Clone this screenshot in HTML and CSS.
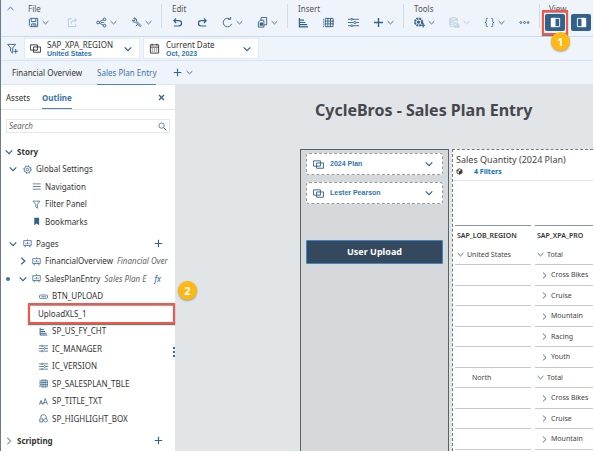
FILE: index.html
```html
<!DOCTYPE html>
<html lang="en">
<head>
<meta charset="utf-8">
<title>Sales Plan Entry</title>
<link rel="stylesheet" href="styles.css">
</head>
<body>
<svg class="sprite" aria-hidden="true">
  <symbol id="down" viewBox="0 0 8 8"><path d="M.7 2.4 4 5.6l3.300-3.200"/></symbol>
  <symbol id="right" viewBox="0 0 8 8"><path d="M2.300.700 5.800 4 2.300 7.300"/></symbol>
  <symbol id="save" viewBox="0 0 12 12"><path d="M2.500 1.500h8v9h-8l-1-1v-7zM3.500 1.500v3.500h5V1.500M4 10.500V7.500h4.500v3M6.500 8v2"/></symbol>
  <symbol id="export" viewBox="0 0 12 12"><path d="M5 2H1.500v8.500h8V8M4.500 7.500c0-3 2-4 5.500-4M8 1.500l2.500 2L8 5.500"/></symbol>
  <symbol id="share" viewBox="0 0 12 12"><path d="M3.500 5.500 8 3M3.500 6.500 8 9"/><circle cx="2.200" cy="6" r="1.500"/><circle cx="9.300" cy="2.600" r="1.500"/><circle cx="9.300" cy="9.400" r="1.500"/><path d="M5.500 6h3"/></symbol>
  <symbol id="wrench" viewBox="0 0 12 12"><path d="M1.500 3.500a2.500 2.500 0 0 0 3.500 2l5 5 1-1-5-5A2.500 2.500 0 0 0 3 1.200L4.500 3 3.500 4.200zM7 8l-1.500 2"/></symbol>
  <symbol id="undo" viewBox="0 0 12 12"><path class="heavy" d="M4.500 1.500 2 4l2.500 2.500M2 4h5.500a2.900 2.900 0 0 1 0 5.800H2"/></symbol>
  <symbol id="redo" viewBox="0 0 12 12"><path class="heavy" d="M7.500 1.500 10 4 7.500 6.500M10 4H4.500a2.900 2.900 0 0 0 0 5.800H10"/></symbol>
  <symbol id="refresh" viewBox="0 0 12 12"><path d="M10.500 7.500A4.700 4.700 0 1 1 8.500 2M6.500 2.500h3V0"/></symbol>
  <symbol id="copy" viewBox="0 0 12 12"><path d="M4.500 3.500v-3h6v8h-3M1.500 5.500l2-2h4v7.500h-6z"/><path class="fill" d="M3 6h3.500v3.500H3z"/></symbol>
  <symbol id="bars" viewBox="0 0 12 12"><path class="heavy" d="M1.500 1v9.700H11M2 3.500h4.500M2 6h6M2 8.400h8"/></symbol>
  <symbol id="grid" viewBox="0 0 12 12"><path d="M2.500 1.500h8.500v9H2.500zM5.300 1v10M8.200 1v10M2 4.500h10M2 7.500h10M.5 2v1M.5 4v1M.5 6v1M.5 8v1M.5 10v1"/></symbol>
  <symbol id="sliders" viewBox="0 0 12 12"><path d="M0 2.500h3M5.500 2.500H12M0 6h6M9 6h3M0 9.500h3M5.500 9.500H12"/><circle cx="4.200" cy="2.500" r="1"/><circle cx="7.500" cy="6" r="1.200"/><circle cx="4.200" cy="9.500" r="1"/></symbol>
  <symbol id="plus" viewBox="0 0 12 12"><path class="bold" d="M6 1v10M1 6h10"/></symbol>
  <symbol id="gearadd" viewBox="0 0 12 12"><circle class="dash" cx="5" cy="5.500" r="3.900"/><circle class="fill" cx="5" cy="5.500" r="1.800"/><path class="heavy" d="M10 6.500v5M7.500 9H12"/></symbol>
  <symbol id="data" viewBox="0 0 12 12"><ellipse cx="5" cy="2.200" rx="4" ry="1.400"/><path d="M1 2.200v7c0 1 2 1.500 3 1.500M9 2.200V5M1 4.600c1 1 2.500 1 4 1M1 7c1 1 2 1 3 1M5.500 11V6.500h3l2.500 2V11zM7.500 11V8.500h2V11"/></symbol>
  <symbol id="braces" viewBox="0 0 12 12"><path d="M4 1.500c-2 0-1.500 1-1.500 2.500C2.500 5.500 2 6 1 6c1 0 1.500.500 1.500 2 0 1.500-.500 2.500 1.500 2.500M8 1.500c2 0 1.500 1 1.500 2.500 0 1.500.500 2 1.500 2-1 0-1.500.500-1.500 2 0 1.500.500 2.500-1.500 2.500"/></symbol>
  <symbol id="dots" viewBox="0 0 12 12"><circle cx="2" cy="6" r="1"/><circle cx="6" cy="6" r="1"/><circle cx="10" cy="6" r="1"/></symbol>
  <symbol id="paneleft" viewBox="0 0 12 12"><path d="M1.500 1.500h9v9h-9z"/><path class="fill" d="M1 1h5v10H1z"/></symbol>
  <symbol id="paneright" viewBox="0 0 12 12"><path d="M1.500 1.500h9v9h-9z"/><path class="fill" d="M6 1h5v10H6z"/></symbol>
  <symbol id="funneladd" viewBox="0 0 12 12"><path d="M.7 1.500h8.600L6.200 5.500V11L4 9V5.500zM9.500 6.500v5M7.200 9H12"/></symbol>
  <symbol id="funnel" viewBox="0 0 12 12"><path d="M1.500 1.500h9L7.200 6v5L5 9V6z"/></symbol>
  <symbol id="layers" viewBox="0 0 12 12"><path d="M.6 2h7.500v5.800H.6zM3.900 4.300h7.500v5.800H3.900z"/></symbol>
  <symbol id="calendar" viewBox="0 0 12 12"><path d="M1.500 2h9v9h-9zM1.500 4.500h9M3.500.8v2M8.500.8v2M3 6.500h1.200M5.400 6.500h1.200M7.800 6.500H9M3 8.700h1.200M5.400 8.700h1.200M7.800 8.700H9"/></symbol>
  <symbol id="close" viewBox="0 0 8 8"><path class="bold" d="M1.200 1.200l5.600 5.600M6.800 1.200 1.200 6.800"/></symbol>
  <symbol id="search" viewBox="0 0 12 12"><circle cx="4.800" cy="4.800" r="3.500"/><path class="heavy" d="M7.500 7.500 11 11"/></symbol>
  <symbol id="gear" viewBox="0 0 12 12"><circle class="teeth" cx="6" cy="6" r="5.200"/><circle cx="6" cy="6" r="4.300"/><circle cx="6" cy="6" r="1.700"/></symbol>
  <symbol id="menu" viewBox="0 0 12 12"><path d="M1 2.500h10.500M1 6h10.500M1 9.500h10.500"/></symbol>
  <symbol id="bookmark" viewBox="0 0 12 12"><path class="fill" d="M3 1h6.500v10L6.200 8.500 3 11z"/></symbol>
  <symbol id="board" viewBox="0 0 12 12"><path d="M1 2.200h10v6.500H1zM6 .5v1.500M3.500 8.700l-1 2.500M8.500 8.700l1 2.500M4 7V5.500M6 7V4M8 7V5"/></symbol>
  <symbol id="button" viewBox="0 0 12 12"><rect x=".7" y="4" width="10.600" height="4.500" rx="1.200"/><path d="M3 6.300h6"/></symbol>
  <symbol id="letters" viewBox="0 0 12 12"><path d="M.5 10 2.700 4.500 5 10M1.300 8.200h2.900M5.500 10l2.800-8 3 8M6.500 7.500h3.800"/></symbol>
  <symbol id="shapes" viewBox="0 0 12 12"><path d="M2.500 5.500v-3l2.500-1.500h2.500L9.500 3v3M1 6.500h4v4H1z"/><circle cx="8.700" cy="8.300" r="2.400"/></symbol>
  <symbol id="cube" viewBox="0 0 12 12"><path class="bold" d="M6 1.200 10.300 3.500v5L6 10.800 1.700 8.500v-5zM1.700 3.500 6 6l4.300-2.500M6 6v4.500"/><path class="fill" d="M6 6l4-2.500v5L6 10.500z"/></symbol>
</svg>

<div class="app">
  <header class="toolbar">
    <button class="collapse" aria-label="Collapse toolbar"><svg class="c flip"><use href="#down"/></svg></button>
    <section class="group">
      <h2>File</h2>
      <div class="tools">
        <button aria-label="Save"><svg class="i"><use href="#save"/></svg><svg class="c"><use href="#down"/></svg></button>
        <button class="roomy" aria-label="Export" disabled><svg class="i"><use href="#export"/></svg></button>
        <button aria-label="Share"><svg class="i"><use href="#share"/></svg><svg class="c"><use href="#down"/></svg></button>
        <button aria-label="Settings"><svg class="i"><use href="#wrench"/></svg><svg class="c"><use href="#down"/></svg></button>
      </div>
    </section>
    <section class="group">
      <h2>Edit</h2>
      <div class="tools">
        <button aria-label="Undo"><svg class="i"><use href="#undo"/></svg></button>
        <button aria-label="Redo"><svg class="i"><use href="#redo"/></svg></button>
        <button aria-label="Refresh"><svg class="i"><use href="#refresh"/></svg><svg class="c"><use href="#down"/></svg></button>
        <button aria-label="Copy"><svg class="i"><use href="#copy"/></svg><svg class="c"><use href="#down"/></svg></button>
      </div>
    </section>
    <section class="group">
      <h2>Insert</h2>
      <div class="tools">
        <button aria-label="Chart"><svg class="i"><use href="#bars"/></svg></button>
        <button aria-label="Table"><svg class="i"><use href="#grid"/></svg></button>
        <button aria-label="Input control"><svg class="i"><use href="#sliders"/></svg></button>
        <button aria-label="Add"><svg class="i"><use href="#plus"/></svg><svg class="c"><use href="#down"/></svg></button>
      </div>
    </section>
    <section class="group">
      <h2>Tools</h2>
      <div class="tools">
        <button aria-label="Add tool"><svg class="i"><use href="#gearadd"/></svg><svg class="c"><use href="#down"/></svg></button>
        <button aria-label="Data" disabled><svg class="i"><use href="#data"/></svg><svg class="c"><use href="#down"/></svg></button>
        <button aria-label="Script variables"><svg class="i"><use href="#braces"/></svg><svg class="c"><use href="#down"/></svg></button>
        <button aria-label="More"><svg class="i"><use href="#dots"/></svg></button>
      </div>
    </section>
    <section class="group view">
      <h2>View</h2>
      <div class="tools">
        <div class="marked">
          <button class="solid" aria-label="Left panel" aria-pressed="true"><svg class="i"><use href="#paneleft"/></svg></button>
          <span class="frame"></span><span class="badge">1</span>
        </div>
        <button class="solid" aria-label="Right panel" aria-pressed="true"><svg class="i"><use href="#paneright"/></svg></button>
      </div>
    </section>
  </header>

  <div class="filters">
    <button class="addfilter" aria-label="Add filter"><svg class="i"><use href="#funneladd"/></svg></button>
    <button class="filter"><svg class="i dark"><use href="#layers"/></svg><span class="lines"><span>SAP_XPA_REGION</span><b>United States</b></span><svg class="c large"><use href="#down"/></svg></button>
    <button class="filter"><svg class="i dark"><use href="#calendar"/></svg><span class="lines"><span>Current Date</span><b>Oct, 2023</b></span><svg class="c large"><use href="#down"/></svg></button>
  </div>

  <nav class="pages">
    <a href="#overview">Financial Overview</a>
    <a href="#entry" class="current">Sales Plan Entry</a>
    <button aria-label="Add page"><svg class="i small"><use href="#plus"/></svg><svg class="c"><use href="#down"/></svg></button>
  </nav>

  <div class="main">
    <aside class="panel">
      <nav class="paneltabs">
        <a href="#assets">Assets</a>
        <a href="#outline" class="current">Outline</a>
        <button aria-label="Close"><svg class="c"><use href="#close"/></svg></button>
      </nav>
      <div class="search"><input type="text" placeholder="Search" aria-label="Search"><svg class="i small"><use href="#search"/></svg></div>
      <div class="tree">
        <ul>
          <li class="l0 strong"><svg class="c large"><use href="#down"/></svg>Story</li>
          <li class="l1"><svg class="c large"><use href="#down"/></svg><svg class="i small"><use href="#gear"/></svg>Global Settings</li>
          <li class="l2"><svg class="i small"><use href="#menu"/></svg>Navigation</li>
          <li class="l2"><svg class="i small"><use href="#funnel"/></svg>Filter Panel</li>
          <li class="l2"><svg class="i small"><use href="#bookmark"/></svg>Bookmarks</li>
        </ul>
        <ul>
          <li class="l1"><svg class="c large"><use href="#down"/></svg><svg class="i small"><use href="#board"/></svg>Pages<button aria-label="Add page"><svg class="i small"><use href="#plus"/></svg></button></li>
          <li class="page"><span class="dot none"></span><svg class="c large"><use href="#right"/></svg><svg class="i small"><use href="#board"/></svg>FinancialOverview<i>Financial Over</i></li>
          <li class="page"><span class="dot"></span><svg class="c large"><use href="#down"/></svg><svg class="i small"><use href="#board"/></svg>SalesPlanEntry<i>Sales Plan E</i><em>fx</em></li>
          <li class="l3"><svg class="i small"><use href="#button"/></svg>BTN_UPLOAD</li>
          <li class="l3 marked picked">UploadXLS_1<span class="frame"></span><span class="badge">2</span></li>
          <li class="l3"><svg class="i small"><use href="#bars"/></svg>SP_US_FY_CHT</li>
          <li class="l3"><svg class="i small"><use href="#sliders"/></svg>IC_MANAGER</li>
          <li class="l3"><svg class="i small"><use href="#sliders"/></svg>IC_VERSION</li>
          <li class="l3"><svg class="i small"><use href="#grid"/></svg>SP_SALESPLAN_TBLE</li>
          <li class="l3"><svg class="i small"><use href="#letters"/></svg>SP_TITLE_TXT</li>
          <li class="l3"><svg class="i small"><use href="#shapes"/></svg>SP_HIGHLIGHT_BOX</li>
        </ul>
        <ul>
          <li class="l0 strong"><svg class="c large faint"><use href="#right"/></svg>Scripting<button aria-label="Add script"><svg class="i small"><use href="#plus"/></svg></button></li>
        </ul>
      </div>
      <span class="grip"></span>
    </aside>

    <main class="canvas">
      <h1>CycleBros - Sales Plan Entry</h1>
      <div class="widgets">
        <section class="controls">
          <button class="picker"><svg class="i"><use href="#layers"/></svg><b>2024 Plan</b><svg class="c large"><use href="#down"/></svg></button>
          <button class="picker"><svg class="i"><use href="#layers"/></svg><b>Lester Pearson</b><svg class="c large"><use href="#down"/></svg></button>
          <button class="upload">User Upload</button>
        </section>
        <section class="sheet">
          <h2>Sales Quantity (2024 Plan)</h2>
          <div class="meta"><svg class="c dark"><use href="#cube"/></svg><a href="#filters">4 Filters</a></div>
          <table>
            <thead><tr><th>SAP_LOB_REGION</th><th>SAP_XPA_PRO</th></tr></thead>
            <tbody>
              <tr><td><svg class="c"><use href="#down"/></svg>United States</td><td><svg class="c"><use href="#down"/></svg>Total</td></tr>
              <tr><td></td><td class="sub"><svg class="c"><use href="#right"/></svg>Cross Bikes</td></tr>
              <tr><td></td><td class="sub"><svg class="c"><use href="#right"/></svg>Cruise</td></tr>
              <tr><td></td><td class="sub"><svg class="c"><use href="#right"/></svg>Mountain</td></tr>
              <tr><td></td><td class="sub"><svg class="c"><use href="#right"/></svg>Racing</td></tr>
              <tr><td></td><td class="sub"><svg class="c"><use href="#right"/></svg>Youth</td></tr>
              <tr><td class="child">North</td><td><svg class="c"><use href="#down"/></svg>Total</td></tr>
              <tr><td></td><td class="sub"><svg class="c"><use href="#right"/></svg>Cross Bikes</td></tr>
              <tr><td></td><td class="sub"><svg class="c"><use href="#right"/></svg>Cruise</td></tr>
              <tr><td></td><td class="sub"><svg class="c"><use href="#right"/></svg>Mountain</td></tr>
            </tbody>
          </table>
        </section>
      </div>
    </main>
  </div>
</div>
</body>
</html>
```
FILE: styles.css
```css
* { box-sizing: border-box; margin: 0; padding: 0; }
body {
  --ink: #346187;
  height: 100vh;
  padding: 0 1px 1px 0;
  overflow: hidden;
  background: #fff;
  color: #333;
  font: 8px/12px "Noto Sans", "Liberation Sans", sans-serif;
}
button { background: none; border: 0; color: inherit; font: inherit; display: flex; align-items: center; }
a { color: inherit; text-decoration: none; }
ul { list-style: none; }
.sprite { position: absolute; width: 0; height: 0; }

svg { fill: none; stroke: var(--ink); stroke-width: 1; flex: none; }
.i { width: 11px; height: 11px; }
.i.small { width: 9px; height: 9px; }
.c { width: 7px; height: 7px; }
.c.large { width: 8px; height: 8px; stroke-width: 1.2; }
.dark { --ink: #333; }
.faint { --ink: #8aa0b5; }
.flip { transform: rotate(180deg); }
.heavy { stroke-width: 1.3; }
.bold { stroke-width: 1.5; }
.fill { fill: var(--ink); stroke: none; }
.dash { stroke-width: 2.2; stroke-dasharray: 2.2 0.9; }
.teeth { stroke-dasharray: 1.5 2.6; }

.app { height: 100%; display: flex; flex-direction: column; border-left: 1px solid #6c7a8c; background: #eef4f9; overflow: hidden; }

.toolbar { display: flex; height: 37px; flex: none; border-bottom: 1px solid #c6dcee; }
.collapse { width: 19px; height: 16px; padding-left: 6px; }
.group { position: relative; padding: 3px 10px 0; }
.group:not(.view)::after { content: ""; position: absolute; right: 0; top: 4px; width: 1px; height: 24px; background: #d5dbe0; }
.group h2 { font-size: 8px; font-weight: 400; line-height: 12px; color: #555; }
.tools { display: flex; gap: 14px; height: 15px; align-items: center; }
.tools button { gap: 3px; }
.tools .roomy { margin: 0 4px; }
.tools button:disabled { opacity: .3; }
.view { padding: 3px 2px 0 5px; }
.view h2 { padding-left: 4px; }
.view .tools { gap: 6px; }
.tools .solid { --ink: #fff; width: 20px; height: 17px; justify-content: center; background: #346187; border-radius: 2px; }

.marked { position: relative; }
.frame { position: absolute; inset: -4px -3px; border: 2px solid #f5564a; box-shadow: 0 1px 1px #777, inset 0 1px 1px #999; z-index: 2; }
.badge {
  position: absolute; z-index: 3; width: 19px; height: 19px; border-radius: 50%;
  background: #fdb813; color: #fff; font-weight: 700; font-size: 11px; line-height: 19px; text-align: center;
  box-shadow: 0 1px 2px #0005;
}
.toolbar .badge { left: 6px; top: 18px; }

.filters { display: flex; height: 24px; flex: none; gap: 3px; padding: 1px 0; border-bottom: 1px solid #d5e4f2; }
.addfilter { width: 20px; padding-left: 6px; }
.filter { width: 116px; padding: 0 7px 0 5px; gap: 6px; background: #fff; border: 1px solid #e3ecf4; text-align: left; }
.lines { flex: 1; display: flex; flex-direction: column; line-height: 9px; }
b { color: #2f74ac; font-family: "Liberation Sans", sans-serif; font-size: 7px; }

.pages { display: flex; height: 24px; flex: none; gap: 15px; padding-left: 11px; line-height: 23px; border-bottom: 1px solid #dbe6f0; }
.pages a { height: 24px; }
.current { color: #3a73a8; border-bottom: 1px solid #4f82b5; }
.pages button { gap: 4px; padding-left: 2px; }

.main { flex: 1; display: flex; min-height: 0; }
.panel { position: relative; width: 174px; flex: none; background: #fff; }
.paneltabs { display: flex; height: 25px; gap: 12px; padding-left: 5px; line-height: 25px; border-bottom: 1px solid #e2e6ea; }
.paneltabs .current { height: 24px; font-weight: 700; }
.paneltabs button { margin: 0 10px 0 auto; }
.search { display: flex; align-items: center; margin: 9px 5px 10px; height: 14px; padding: 0 2px; border: 1px solid #e5e8eb; }
.search input { flex: 1; min-width: 0; border: 0; outline: 0; font: italic 8px/12px "Noto Sans", "Liberation Sans", sans-serif; }
.search input::placeholder { color: #666; }
.tree { display: flex; flex-direction: column; gap: 5px; }
.tree li { display: flex; align-items: center; height: 17px; gap: 4px; white-space: nowrap; }
.tree li:nth-child(even) { height: 18px; }
.tree button { margin: 0 12px 0 auto; }
.l0 { padding-left: 4px; }
.l1 { padding-left: 8px; }
.tree .l1 svg + svg { margin-left: 2px; }
.l2 { padding-left: 31px; }
.l3 { padding-left: 38px; }
.tree .picked { padding-left: 37px; }
.strong { font-weight: 700; }
.page { padding-left: 5px; }
.page svg + svg { margin-left: 1px; }
.dot { width: 4px; height: 4px; border-radius: 50%; background: #3a73a8; margin-right: 5px; }
.none { visibility: hidden; }
.page i { color: #666; }
.page em { color: #2f5f8c; margin-left: 4px; }
.tree .frame { inset: -2px 0 -2px 27px; }
.tree .badge { left: 177px; top: -24px; }
.grip { position: absolute; right: 0; top: 262px; width: 2px; height: 11px; background: repeating-linear-gradient(#2f6ca3 0 2px, #fff 2px 4px); }

.canvas { flex: 1; min-width: 0; display: flex; flex-direction: column; overflow: hidden; background: #e1e5e8; padding-left: 125px; }
.canvas h1 { padding: 13px 0 0 15px; height: 64px; font-size: 16px; line-height: 24px; color: #46474c; white-space: nowrap; }
.widgets { flex: 1; min-height: 0; display: flex; gap: 3px; }
.controls { width: 149px; flex: none; padding: 3px 5px; display: flex; flex-direction: column; gap: 7px; background: #d5d9dc; border: 1px solid #5c6166; border-bottom: 0; }
.picker { height: 22px; gap: 6px; padding: 0 9px 0 6px; background: #fff; border: 1px dashed #999; border-radius: 3px; }
.picker .c { margin-left: auto; }
.upload { height: 24px; margin-top: 29px; justify-content: center; background: #34495e; border: 1px solid #3f86c6; color: #fff; font-weight: 700; font-size: 9px; border-radius: 1px; }
.sheet { flex: 1; min-width: 0; overflow: hidden; background: #fff; border: 1px dashed #777; border-width: 1px 0 0 1px; }
.sheet h2 { padding: 3px 3px 0; font-size: 9px; font-weight: 400; line-height: 13px; white-space: nowrap; color: #444; }
.meta { display: flex; align-items: center; height: 15px; padding: 0 0 3px 3px; gap: 11px; border-bottom: 1px solid #e5e5e5; }
.meta a { color: #0a6fb8; font-weight: 700; font-size: 7px; }
table { width: 170px; margin: 44px 0 0 -2px; border-spacing: 4px 0; table-layout: fixed; }
th, td { height: 20px; padding-left: 2px; text-align: left; white-space: nowrap; border-bottom: 1px solid #c9c9c9; }
th { border: 0; border-top: 1px solid #8696a9; font-weight: 600; font-size: 7px; }
th:first-child { width: 76px; }
tbody tr:nth-child(even) td { height: 21px; }
td { font-size: 7px; color: #444; }
td svg { vertical-align: middle; margin-right: 3px; }
.sub { padding-left: 6px; }
td.child { padding-left: 17px; }
```
